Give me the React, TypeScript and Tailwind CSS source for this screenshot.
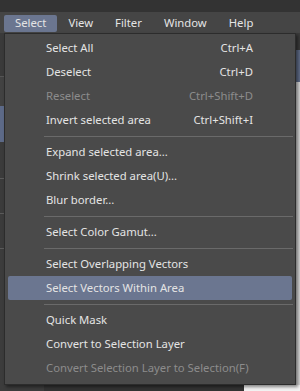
import React from "react";

type Item =
  | { label: string; shortcut?: string; disabled?: boolean; active?: boolean }
  | "sep";

const items: Item[] = [
  { label: "Select All", shortcut: "Ctrl+A" },
  { label: "Deselect", shortcut: "Ctrl+D" },
  { label: "Reselect", shortcut: "Ctrl+Shift+D", disabled: true },
  { label: "Invert selected area", shortcut: "Ctrl+Shift+I" },
  "sep",
  { label: "Expand selected area..." },
  { label: "Shrink selected area(U)..." },
  { label: "Blur border..." },
  "sep",
  { label: "Select Color Gamut..." },
  "sep",
  { label: "Select Overlapping Vectors" },
  { label: "Select Vectors Within Area", active: true },
  "sep",
  { label: "Quick Mask" },
  { label: "Convert to Selection Layer" },
  { label: "Convert Selection Layer to Selection(F)", disabled: true },
];

const menus = ["Select", "View", "Filter", "Window", "Help"];

export default function App() {
  return (
    <div
      className="relative flex h-[391px] w-[300px] flex-col overflow-hidden bg-[#333333] text-[11.3px] text-[#e4e4e4]"
      style={{ fontFamily: '"Noto Sans", "Open Sans", sans-serif' }}
    >
      {/* title strip */}
      <div className="h-[12px] shrink-0 bg-[#333333]" />

      {/* menu bar */}
      <div className="flex h-[21px] shrink-0 items-stretch bg-[#454545] pl-[4px]">
        {menus.map((m, i) => (
          <div
            key={m}
            className={
              i === 0
                ? "mt-[3px] mb-px flex items-center rounded-[2px] bg-[#6b7690] px-[11px]"
                : "mt-[3px] mb-px flex items-center px-[11px]"
            }
          >
            {m}
          </div>
        ))}
      </div>

      {/* app behind the menu */}
      <div className="flex min-h-0 flex-1">
        <div className="flex w-[44px] flex-col bg-[#3b3b3b]">
          <div className="h-[44px] border-b border-[#555] bg-[#3a3a3a]" />
          <div className="h-[29px] bg-[#424242]" />
          <div className="h-[36px] bg-[#5d6a88]" />
          <div className="h-[37px] border-b border-[#5a5a5a]" />
          <div className="h-[35px] border-b border-[#5a5a5a]" />
          <div className="h-[35px] border-b border-[#5a5a5a]" />
          <div className="flex-1 bg-[#3c3c3c]" />
        </div>
        <div className="flex-1 bg-[#333333]" />
        <div className="flex w-[56px] flex-col bg-[#d6d6d6]">
          <div className="h-[17px] bg-[#3a3a3a]" />
          <div className="h-[32px] bg-[#5e6a85]" />
          <div className="flex-1 bg-[#d4d4d4]" />
          <div className="h-[6px] bg-[#f2f2f2]" />
        </div>
      </div>

      {/* dropdown */}
      <div className="absolute left-[4px] top-[33px] w-[292px] border border-[#2c2c2c] bg-[#4a4a4a] pb-[4px] pt-[2px] shadow-[2px_2px_3px_rgba(0,0,0,0.45)]">
        {items.map((it, i) =>
          it === "sep" ? (
            <div key={i} className="flex h-[8px] items-center pl-[39px] pr-[2px]">
              <div className="h-px w-full bg-[#6a6a6a]" />
            </div>
          ) : (
            <div
              key={i}
              className={
                "mx-[3px] flex h-[24px] items-center justify-between rounded-[2px] pl-[38px] pr-[39px] " +
                (it.active ? "bg-[#6b7690] " : "") +
                (it.disabled ? "text-[#8c8c8c]" : "text-[#e4e4e4]")
              }
            >
              <span className="whitespace-nowrap">{it.label}</span>
              {it.shortcut && <span className="whitespace-nowrap">{it.shortcut}</span>}
            </div>
          )
        )}
      </div>
    </div>
  );
}
